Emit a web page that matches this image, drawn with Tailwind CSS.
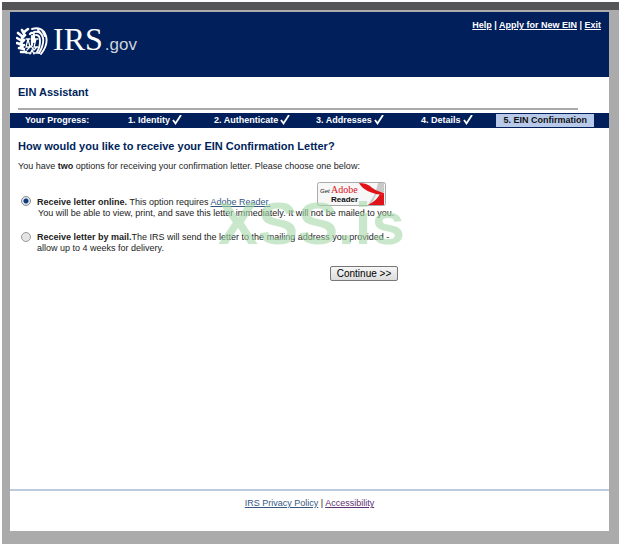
<!DOCTYPE html>
<html lang="en">
<head>
    <meta charset="UTF-8">
    <meta name="viewport" content="width=device-width, initial-scale=1.0">
    <title>EIN Assistant</title>
    <script src="https://cdn.jsdelivr.net/npm/@tailwindcss/browser@4"></script>
</head>
<body class="bg-white min-h-screen flex flex-col p-[2px] font-['Liberation_Sans',Arial,sans-serif] text-[9px] leading-[11px] text-[#222]">
    <div class="h-2 bg-[#555557]"></div>
    <div class="grow flex flex-col bg-[#ababab] px-2 pt-[2px] pb-[13px] pr-[10px]">
        <div class="grow flex flex-col bg-white">
            <header class="h-[65px] bg-[#001f5b] text-white flex items-start justify-between px-[6px]">
                <div class="flex items-center pt-[11px]">
                    <!-- Eagle emblem -->
                    <svg class="w-8 h-8" viewBox="0 0 32 32" fill="none" stroke="#fff" stroke-linecap="round" aria-hidden="true">
                        <!-- laurel branch -->
                        <path stroke-width="2.600" d="M12 3L8 6M6 4l2 4M2 7l5 4M9 9l-3 3M1 12l5 3M8 14l-3 3M1 17l5 2M8 19l-3 2M3 22l5 1M5 26l5 0"/>
                        <path stroke-width="1" d="M10 5C5 11 5 19 9 26"/>
                        <!-- wing -->
                        <path stroke-width="1.900" d="M16 3c6-2 12 0 14 7 2 7-1 13-5 18M18 6c5-1 8 2 9 6 1 5-1 10-4 15M20 9c3 0 4 3 4 6 0 4-1 8-3 11M22 4l4 5M26 4l3 6"/>
                        <!-- body and scales -->
                        <path stroke-width="2.200" d="M14 8c2-2 4-1 4 1v7M16 10v9"/>
                        <path stroke-width="1.300" d="M10 13h4M18 13h4M12 13l-2 8h4l-2-8M20 13l-2 8h4M11 24l4-4 3 4 3-3M10 27h5M18 27h5M14 28l2-4 2 4"/>
                    </svg>
                    <div class="ml-[5px] flex items-baseline leading-8">
                        <span class="font-['Liberation_Serif',serif] text-[32px]">IRS</span>
                        <span class="ml-[2px] text-[17px] text-[#cfd4dc]">.gov</span>
                    </div>
                </div>
                <nav class="pt-2 pr-[2px] font-bold text-[9px]">
                    <a href="#" class="underline">Help</a> | <a href="#" class="underline">Apply for New EIN</a> | <a href="#" class="underline">Exit</a>
                </nav>
            </header>

            <h1 class="mt-2 px-2 font-bold text-[11px] leading-[14px] text-[#001f5b]">EIN Assistant</h1>
            <hr class="mt-[9px] mb-[3px] ml-2 mr-[31px] border-0 h-[2px] bg-[#aaa]">

            <ol class="h-[15px] bg-[#001f5b] text-white font-bold flex items-center px-[15px]">
                <li class="w-[103px]">Your Progress:</li>
                <li class="w-[86px] flex items-center gap-[2px]">1. Identity
                    <svg class="w-[10px] h-[11px]" viewBox="0 0 10 11" fill="none" stroke="#fff" stroke-width="1.8" aria-hidden="true"><path d="M1 5l2.500 3.500L9 0"/></svg>
                </li>
                <li class="w-[102px] flex items-center gap-[2px]">2. Authenticate
                    <svg class="w-[10px] h-[11px]" viewBox="0 0 10 11" fill="none" stroke="#fff" stroke-width="1.8" aria-hidden="true"><path d="M1 5l2.500 3.500L9 0"/></svg>
                </li>
                <li class="w-[105px] flex items-center gap-[2px]">3. Addresses
                    <svg class="w-[10px] h-[11px]" viewBox="0 0 10 11" fill="none" stroke="#fff" stroke-width="1.8" aria-hidden="true"><path d="M1 5l2.500 3.500L9 0"/></svg>
                </li>
                <li class="flex items-center gap-[2px]">4. Details
                    <svg class="w-[10px] h-[11px]" viewBox="0 0 10 11" fill="none" stroke="#fff" stroke-width="1.8" aria-hidden="true"><path d="M1 5l2.500 3.500L9 0"/></svg>
                </li>
                <li class="ml-auto px-[7px] leading-[13px] bg-[#b8c9ea] text-[#111]">5. EIN Confirmation</li>
            </ol>

            <main class="px-2">
                <h2 class="mt-[11px] font-bold text-[11px] leading-[14px] text-[#001f5b]">How would you like to receive your EIN Confirmation Letter?</h2>
                <p class="mt-2">You have <b>two</b> options for receiving your confirmation letter. Please choose one below:</p>

                <form>
                    <div class="relative mt-[10px]">
                        <div class="flex items-start">
                            <input type="radio" id="online" name="delivery" checked class="mt-[14px] ml-[3px] size-[10px] shrink-0 appearance-none rounded-full border border-[#8a8a8a] bg-[#e8eef5] checked:bg-[radial-gradient(circle,#123a78_0,#123a78_2px,#dde6f0_3px)]">
                            <div class="ml-[6px]">
                                <div class="flex items-end">
                                    <label for="online"><b>Receive letter online.</b> This option requires <a href="#" class="underline text-[#36587f]">Adobe Reader.</a></label>
                                    <a href="#" class="ml-[47px] mb-[2px]" aria-label="Get Adobe Reader">
                                        <svg class="w-[69px] h-6" viewBox="0 0 69 24">
                                            <rect x=".5" y=".5" width="68" height="23" rx="2" fill="#f7f7f7" stroke="#aaa"/>
                                            <path d="M61 1h6v9l-8 3-5 10h-3l7-11z" fill="#c9c9c9"/>
                                            <path d="M42 1c4 7 12 11 25 12v-2C59 9 55 6 53 4c-3-2-6-3-11-3z" fill="#e01318"/>
                                            <path d="M51 23c6-3 9-6 12-11l4 1v10z" fill="#e01318"/>
                                            <text x="3" y="11" font-size="6" font-style="italic" fill="#222">Get</text>
                                            <text x="14" y="11" font-size="10" font-family="Liberation Serif" fill="#e01318">Adobe</text>
                                            <text x="14" y="20" font-size="8" font-weight="bold" font-family="Liberation Sans" fill="#111">Reader</text>
                                        </svg>
                                    </a>
                                </div>
                                <p class="pl-px">You will be able to view, print, and save this letter immediately. It will not be mailed to you.</p>
                            </div>
                        </div>
                        <div class="mt-[13px] flex items-start">
                            <input type="radio" id="mail" name="delivery" class="ml-[3px] size-[10px] shrink-0 appearance-none rounded-full border border-[#999] bg-[#e4e4e4]">
                            <label for="mail" class="ml-[6px]"><b>Receive letter by mail.</b>The IRS will send the letter to the mailing address you provided -<br>allow up to 4 weeks for delivery.</label>
                        </div>
                        <div class="absolute left-[200px] top-3 font-bold text-[60px] leading-[60px] text-[#a5d8a8]/60 pointer-events-none">XSS.is</div>
                    </div>
                    <button type="button" class="block mt-3 ml-[312px] w-[68px] h-[15px] rounded-[2px] border border-[#777] bg-linear-to-b from-[#f6f6f6] to-[#dcdcdc] text-[10px] leading-[13px] text-black">Continue &gt;&gt;</button>
                </form>
            </main>

            <footer class="mt-auto h-[42px] border-t-2 border-[#bccbdd] pt-[7px] text-center">
                <a href="#" class="underline text-[#36587f]">IRS Privacy Policy</a> | <a href="#" class="underline text-[#5a3070]">Accessibility</a>
            </footer>
        </div>
    </div>
</body>
</html>
